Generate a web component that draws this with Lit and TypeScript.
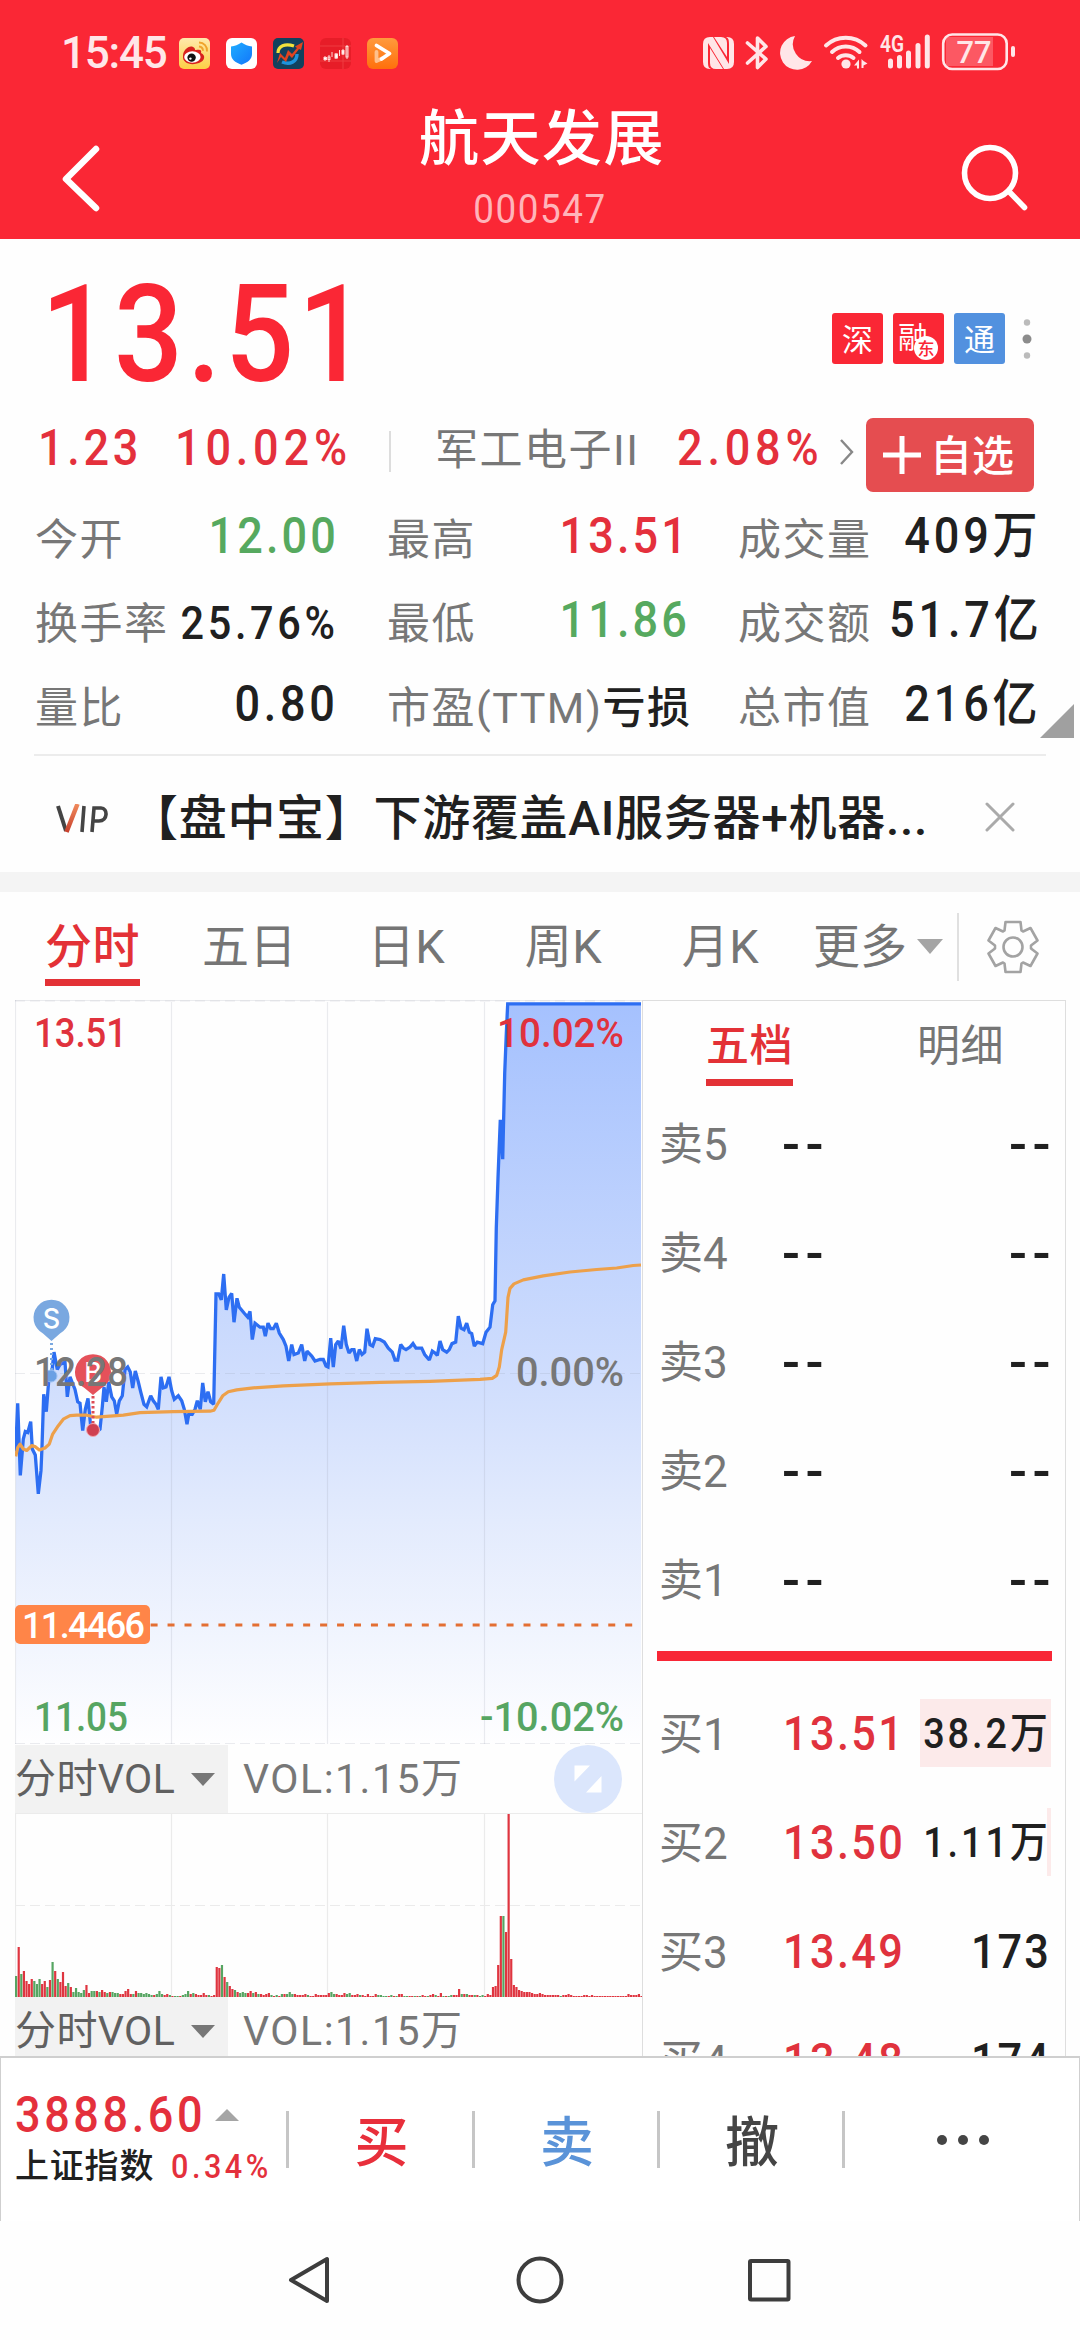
import { LitElement, html, css, svg } from "lit";
import { customElement, property } from "lit/decorators.js";
import { classMap } from "lit/directives/class-map.js";

type Cell = { label: string; value: string; tone?: string };
type Order = { label: string; price: string; qty: string; bar: number; wan?: boolean };

const CELLS: Cell[] = [
  { label: "今开", value: "12.00", tone: "down" },
  { label: "最高", value: "13.51", tone: "up" },
  { label: "成交量", value: "409万", tone: "wide" },
  { label: "换手率", value: "25.76%", tone: "small" },
  { label: "最低", value: "11.86", tone: "down" },
  { label: "成交额", value: "51.7亿", tone: "wide" },
  { label: "量比", value: "0.80" },
  { label: "市盈(TTM)", value: "亏损", tone: "cjk" },
  { label: "总市值", value: "216亿", tone: "wide" },
];

const BIDS: Order[] = [
  { label: "买1", price: "13.51", qty: "38.2万", bar: 131, wan: true },
  { label: "买2", price: "13.50", qty: "1.11万", bar: 4, wan: true },
  { label: "买3", price: "13.49", qty: "173", bar: 0 },
  { label: "买4", price: "13.48", qty: "174", bar: 0 },
];

// Intraday price samples on a 3 x 2.01 sub-pixel grid.
const PRICE = `47,950 53,853 61,998 70,925 76,910 83,912 92,890 97,945 106,957 115,1035 123,988 126,940 131,835 139,870 147,800 154,800
162,750 172,785 180,775 195,770 202,840 210,800 225,825 233,850 240,853 248,908 256,865 264,843 272,900 287,912 300,905 307,860 312,820
319,850 326,810 335,840 343,848 350,875 358,848 367,838 375,785 383,780 391,790 398,822 406,788 415,810 422,830 432,855 440,860 452,838
460,848 468,855 475,865 483,800 490,822 498,820 507,800 515,828 523,845 535,838 545,848 553,865 561,895 567,872 577,875 585,865 592,848
601,865 608,812 616,850 624,830 632,850 641,855 648,633 656,633 664,645 671,593 679,665 687,640 695,632 702,690 711,642 718,660 733,672
743,680 750,668 757,725 765,692 780,700 790,700 796,718 804,692 812,703 820,703 829,692 838,712 850,725 858,738 866,768 875,735 882,755
895,752 905,735 914,768 921,748 935,758 945,768 960,765 970,765 978,778 984,780 992,722 1000,780 1007,735 1015,728 1023,743 1031,697
1039,735 1047,752 1055,745 1062,745 1070,768 1078,745 1086,755 1094,750 1101,703 1110,735 1118,738 1126,723 1140,725 1153,730 1165,742
1177,750 1185,766 1193,766 1202,735 1210,742 1218,745 1230,740 1239,733 1248,742 1265,742 1274,755 1288,766 1297,748 1305,752 1312,757
1320,728 1328,745 1340,750 1348,745 1356,733 1367,730 1375,678 1383,702 1392,705 1400,692 1408,710 1415,713 1423,738 1432,730 1448,733
1458,710 1470,700 1478,655 1485,647 1489,500 1494,400 1501,283 1508,362 1514,190 1519,110 1523,50 1923,50`;

const AVERAGE = `47,960 53,942 60,935 70,945 80,948 95,938 105,940 118,947 135,943 148,935 158,915 175,898 190,885 210,878 230,877 260,877
290,881 330,879 370,877 420,872 520,870 630,869 642,867 655,852 668,838 685,830 710,826 760,822 850,818 990,814 1140,811 1290,809
1440,805 1477,803 1490,797 1498,780 1505,745 1517,710 1520,680 1524,640 1530,622 1542,613 1570,605 1630,597 1710,589 1790,584 1850,581
1900,576 1923,575`;

const toPath = (src: string) =>
  src
    .trim()
    .split(/\s+/)
    .map((p) => {
      const [u, v] = p.split(",").map(Number);
      return `${(u / 3 - 15).toFixed(1)},${(v * 0.4974 - 21).toFixed(1)}`;
    })
    .join(" ");

// Per-minute volume, negative where the minute closed lower.
const VOLUME = [
  -21, 50, -23, 26, 16, 13, 18, -16, -13, -18, 13, 16, -10, 17, -35, 26, -18, 15, 25, 11, -14, 10, -5, -9, -5, -4, -7, 12, 4, -6, -6, 6,
  -5, 7, 5, -4, 5, -5, -4, -4, 3, 3, 6, 8, 3, -3, 6, -4, -4, -3, -4, -3, -2, 2, -3, -6, -3, 2, 3, -2, 1, -1, -1, 1, -2, -3, -6, 3, -4,
  3, 2, 2, 4, 2, -2, 1, 2, 30, 29, -32, 20, -15, 11, 8, -7, 5, -4, -5, -4, 4, 6, -4, 5, -3, 3, 2, 3, 4, -2, 1, -2, 1, -3, 3, -3, -5, -3,
  3, 2, 2, 2, 3, -2, 1, 1, 3, 2, 2, 2, 2, 4, -5, -3, 3, 2, 2, 4, -3, -4, 2, 2, 3, -2, 2, 1, 3, 1, 1, 3, -2, -2, -1, -1, 1, -2, 1, -1, 3,
  3, -1, -1, 1, 1, -1, 1, -1, 2, 1, -1, 2, 3, -2, 1, 4, -1, 1, -1, -2, 2, 2, 8, -3, 3, -3, 2, 2, -2, 2, -1, -2, 1, 3, 2, 10, 11, 32, 81,
  -81, 65, 183, 38, 12, 10, 7, 6, 5, 5, 5, 4, 3, 3, 4, 3, 2, 2, 2, 2, 2, 2, -1, 2, 2, 3, 2, 1, 1, 1, 1, 2, 2, 1, 2, 1, 1, 1, 1, 1, 1, 1,
  1, 1, 1, 1, 1, 1, 3, 2, 2, 2, 3, 1, 0, 4,
];

const RED = "#df3540";
const GREEN = "#56a562";

// Narrow figures with open spacing, used for every quote number.
const figures = css`
  .fig { display: inline-block; transform: scaleX(0.9); transform-origin: left center; letter-spacing: 0.082em; font-weight: 500; white-space: nowrap; }
  .fig.right { transform-origin: right center; margin-right: -0.074em; }
`;

@customElement("status-bar")
class StatusBar extends LitElement {
  static styles = css`
    :host { display: block; height: 106px; }
    .bar { display: flex; align-items: center; height: 106px; padding: 0 65px 0 61px; box-sizing: border-box; }
    .clock { font: 500 44px/60px Roboto, sans-serif; color: #ffe6e8; width: 118px; letter-spacing: -1.2px; }
    .apps { display: flex; gap: 16px; }
    .spacer { flex: 1; }
    svg { display: block; }
  `;
  render() {
    const c = "#ffe6e8";
    return html`<div class="bar">
      <span class="clock">15:45</span>
      <div class="apps">
        <svg width="31" height="31" viewBox="0 0 31 31">
          <defs><linearGradient id="w" x2="0" y2="1"><stop stop-color="#ffe9ac" /><stop offset="1" stop-color="#fdcf45" /></linearGradient></defs>
          <rect width="31" height="31" rx="5" fill="url(#w)" />
          <path d="M4 18 C4 12 10 7 14 9 C17 10 15 12 17 12 C21 11 23 12 22 15 C27 17 26 23 20 25 C12 28 3 25 4 18Z" fill="#d9211d" />
          <ellipse cx="13.4" cy="19" rx="8.2" ry="5.8" fill="#fff" />
          <circle cx="12.6" cy="19.6" r="4.2" fill="#111" /><circle cx="11.4" cy="20.6" r="1.2" fill="#fff" />
          <path d="M20 4.5 A8 8 0 0 1 28 13.5 M20 8.5 A4.5 4.5 0 0 1 24 12.8" fill="none" stroke="#f0a32c" stroke-width="1.9" />
        </svg>
        <svg width="31" height="31" viewBox="0 0 31 31">
          <defs><linearGradient id="s" y2="1"><stop stop-color="#20adff" /><stop offset="1" stop-color="#1276fb" /></linearGradient></defs>
          <rect width="31" height="31" rx="6" fill="#fff" />
          <path d="M15.5 4.5 C19 7 22 8 26 8.5 V16 C26 21 22 24.5 15.5 26.7 C9 24.5 5 21 5 16 V8.5 C9 8 12 7 15.5 4.5Z" fill="url(#s)" />
        </svg>
        <svg width="31" height="31" viewBox="0 0 31 31">
          <rect width="31" height="31" rx="5" fill="#12415d" />
          <path d="M5 15 C5 8 12 5 21 8" fill="none" stroke="#f3e23c" stroke-width="3.2" />
          <path d="M24 16 C24 24 17 27 9 24" fill="none" stroke="#1e93dc" stroke-width="3.4" />
          <path d="M4 25 L7 15 L12 20 L15 12 L19 16 L24 10 L22 8.5 L30 4 L28 12 L26 11 L19 20 L16 17 L13 24 L8 19Z" fill="#e2431f" />
        </svg>
        <svg width="31" height="31" viewBox="0 0 31 31">
          <rect width="31" height="31" rx="6" fill="#e71d28" />
          <path d="M0 8 H31 M0 23 H31 M23 0 V31" stroke="#ef3c40" stroke-width="1" />
          <g stroke="#ffd9d6" stroke-width="1" fill="#fff">
            <path d="M5 18 V23 M9 17 V24 M12 14 V19 M16 15 V21 M19.500 12 V18 M23 11 V17 M27 7 V21" />
            <rect x="4" y="19.500" width="2.500" height="2" /><rect x="8" y="19" width="2" height="2.500" fill="none" />
            <rect x="15" y="16" width="2.500" height="4" /><rect x="22" y="12.500" width="2" height="3.500" /><rect x="26" y="8.500" width="2" height="10.500" fill="none" />
          </g>
        </svg>
        <svg width="31" height="31" viewBox="0 0 31 31">
          <defs><linearGradient id="p" x2="0" y2="1"><stop stop-color="#ff9a3c" /><stop offset="1" stop-color="#ff6f0c" /></linearGradient></defs>
          <rect width="31" height="31" rx="6" fill="url(#p)" />
          <path d="M9.500 14 L9.500 23 L15 20.500" fill="none" stroke="#ffc08c" stroke-width="3.800" stroke-linecap="round" stroke-linejoin="round" />
          <path d="M9.500 7.500 L22.500 15.500 L14.500 21" fill="none" stroke="#fff" stroke-width="3.800" stroke-linecap="round" stroke-linejoin="round" />
        </svg>
      </div>
      <span class="spacer"></span>
      <svg width="312" height="56" viewBox="703 25 312 56">
        <path d="M710 37 H713 L729 64 V44 C729 39 728 37 725 37 H727 Q734 37 734 44 V62 Q734 69 727 69 H724 L708 43 V62 C708 67 709 69 712 69 H710 Q703 69 703 62 V44 Q703 37 710 37Z" fill=${c} />
        <path d="M714 37 H721 Q727 37 727 43 V57Z M723 69 H716 Q710 69 710 63 V48Z" fill=${c} />
        <path d="M747.500 43 L766 59 L757.500 67.500 V38 L766 46.500 L747.500 63" fill="none" stroke=${c} stroke-width="3.600" stroke-linejoin="round" stroke-linecap="round" />
        <path d="M795 36 A17 17 0 1 0 812 61 A17 17 0 0 1 795 36Z" fill=${c} />
        <g fill="none" stroke=${c} stroke-width="4" stroke-linecap="round">
          <path d="M826 45.500 A29 29 0 0 1 865.500 45.500 M832 52 A20 20 0 0 1 859.500 52 M838 58 A12 12 0 0 1 853.500 58" />
        </g>
        <circle cx="846" cy="64" r="4.600" fill=${c} />
        <path d="M854 65.500 L859 59.500 V68.500 H857 V65.500Z M861.500 59 V68 H863.500 V65.500 L867.500 63.500 L863.500 61Z" fill=${c} />
        <text x="880" y="52" font-family="Roboto, sans-serif" font-size="23" font-weight="600" textLength="24" lengthAdjust="spacingAndGlyphs" fill=${c}>4G</text>
        <g stroke=${c} stroke-width="5" stroke-linecap="round">
          <path d="M890.500 61 V66 M899.500 57.500 V66 M908.500 53 V66 M918 45.500 V66 M927.300 37 V66" />
        </g>
        <rect x="946" y="37" width="47" height="29" fill="#fc5863" />
        <rect x="943.200" y="34.500" width="63.500" height="34.500" rx="9" fill="none" stroke=${c} stroke-width="2.600" />
        <rect x="1011" y="46" width="4" height="11" rx="2" fill=${c} />
        <text x="956.500" y="63" font-family="Roboto, sans-serif" font-size="32" font-weight="500" textLength="35" lengthAdjust="spacingAndGlyphs" fill=${c}>77</text>
      </svg>
    </div>`;
  }
}

@customElement("title-bar")
class TitleBar extends LitElement {
  static styles = css`
    :host { display: block; }
    .bar { display: flex; justify-content: space-between; height: 133px; padding: 0 48px 0 60px; box-sizing: border-box; }
    .side { display: flex; width: 72px; padding-top: 36px; }
    .back { width: 60px; }
    .mid { text-align: center; color: #fff; }
    .name { font: 500 60px/66px "Noto Sans CJK SC", sans-serif; letter-spacing: 1.5px; margin: -5px -2px 0 2px; }
    .code { font: 400 40px/50px Roboto, sans-serif; margin-top: 18px; color: #ffb4ba; transform: scaleX(0.92); letter-spacing: 1.7px; }
  `;
  render() {
    return html`<div class="bar">
      <div class="side back">
        <svg width="44" height="72" viewBox="60 142 44 72"><path d="M96 149 L66 179 L96 208" fill="none" stroke="#fff" stroke-width="6.500" stroke-linecap="round" stroke-linejoin="round" /></svg>
      </div>
      <div class="mid"><div class="name">航天发展</div><div class="code">000547</div></div>
      <div class="side">
        <svg width="72" height="72" viewBox="960 142 72 72"><g fill="none" stroke="#fff" stroke-width="5.600" stroke-linecap="round"><circle cx="990" cy="173" r="25.500" /><path d="M1009 191.500 L1024.500 207.500" /></g></svg>
      </div>
    </div>`;
  }
}

@customElement("quote-panel")
class QuotePanel extends LitElement {
  static styles = [
    figures,
    css`
      :host { display: block; font-family: Roboto, "Noto Sans CJK SC", sans-serif; color: #202020; }
      .top { display: flex; align-items: center; height: 178px; padding: 10px 38px 0 41px; box-sizing: border-box; }
      .last { font-size: 135px; line-height: 168px; color: #fa2735; flex: 1; letter-spacing: 0.033em; padding-top: 4px; }
      .tags { display: flex; gap: 10px; align-items: center; margin-top: 11px; }
      .tag { width: 51px; height: 51px; border-radius: 3px; background: #fa2735; color: #fff; font: 400 31px/49px "Noto Sans CJK SC", sans-serif; text-align: center; position: relative; }
      .tag.blue { background: #5291df; }
      .tag.rong { font-size: 30px; line-height: 44px; text-align: left; padding-left: 5px; box-sizing: border-box; }
      .dong { position: absolute; left: 21px; top: 23px; width: 24px; height: 24px; border-radius: 50%; background: #fff; color: #fa2735; font: 500 17px/23px "Noto Sans CJK SC", sans-serif; text-align: center; }
      .more { margin-left: 5px; display: block; width: 22px; }
      .row { display: flex; height: 76px; line-height: 63px; padding-left: 38px; }
      .n { font-size: 50px; color: #e4303c; }
      .chg { display: flex; width: 137px; }
      .pct { display: flex; width: 214px; }
      .pct .n, .spct .n { letter-spacing: 0.107em; }
      .rule { width: 2px; height: 41px; margin: 14px 44px 0 0; background: #ddd; }
      .sector { font-size: 43px; line-height: 66px; width: 242px; color: #777; letter-spacing: 1.5px; }
      .spct { display: flex; width: 161px; }
      .go { width: 28px; display: block; margin-top: 20px; }
      .add { display: flex; align-items: center; width: 168px; height: 74px; line-height: 60px; margin-top: 1px; box-sizing: border-box; padding: 4px 0 0 17px; border-radius: 7px; background: #e54d50; color: #fff; font-size: 42px; font-weight: 500; }
      .add svg { margin-right: 9px; margin-top: -4px; }
      .grid { position: relative; display: grid; grid-template-columns: 300px 299px 298px; column-gap: 52px; padding: 5px 0 0 35px; grid-auto-rows: 84px; }
      .cell { display: flex; justify-content: space-between; align-items: center; white-space: nowrap; }
      .label { font-size: 43px; line-height: 84px; color: #777; letter-spacing: 1.5px; }
      .value { font-size: 50px; line-height: 76px; padding-bottom: 8px; }
      .up { color: #e4303c; }
      .down { color: #56a95f; }
      .up, .down { letter-spacing: 0.07em; }
      .fig.wide { letter-spacing: 0.086em; margin-right: -5px; }
      .fig.small { font-size: 46px; line-height: 80px; padding: 0 0 2px; letter-spacing: 0.088em; margin: 0 -4px 0 -30px; }
      .value.cjk { font-size: 43px; line-height: 84px; padding: 0; transform: none; letter-spacing: 1.5px; margin: 0; }
      .corner { position: absolute; right: 6px; bottom: 12px; width: 34px; height: 34px; background: #a0a0a0; clip-path: polygon(100% 0, 100% 100%, 0 100%); }
      .vip { display: flex; align-items: center; height: 118px; margin: 4px 34px 0; border-top: 2px solid #ececec; box-sizing: border-box; padding-top: 10px; }
      .logo { display: block; width: 52px; margin-left: 22px; flex: none; }
      .headline { font-size: 48px; font-weight: 500; line-height: 70px; width: 855px; flex: none; margin-left: 22px; letter-spacing: 0.7px; white-space: nowrap; }
      .close { margin-top: -4px; }
    `,
  ];
  render() {
    return html`
      <div class="top">
        <span class="fig last">13.51</span>
        <div class="tags">
          <span class="tag">深</span>
          <span class="tag rong">融<span class="dong">东</span></span>
          <span class="tag blue">通</span>
          <svg class="more" height="44" viewBox="0 0 22 44"><circle cx="7" cy="5.500" r="3.200" fill="#bbb" /><circle cx="7" cy="22" r="4.500" fill="#8c8c8c" /><circle cx="7" cy="38.500" r="3.200" fill="#bbb" /></svg>
        </div>
      </div>
      <div class="row">
        <span class="chg"><span class="fig n">1.23</span></span><span class="pct"><span class="fig n">10.02%</span></span><span class="rule"></span>
        <span class="sector">军工电子II</span><span class="spct"><span class="fig n">2.08%</span></span>
        <svg class="go" height="30" viewBox="0 0 28 30"><path d="M3 3 L14 15 L3 27" fill="none" stroke="#888" stroke-width="2.400" /></svg>
        <div class="add"><svg width="38" height="38" viewBox="0 0 38 38"><path d="M19 0 V38 M0 19 H38" stroke="#fff" stroke-width="5" /></svg>自选</div>
      </div>
      <div class="grid">
        ${CELLS.map((c) => html`<div class="cell"><span class="label">${c.label}</span><span class="fig right value ${c.tone ?? ""}">${c.value}</span></div>`)}
        <span class="corner"></span>
      </div>
      <div class="vip">
        <svg class="logo" height="30" viewBox="0 0 52 30">
          <defs><linearGradient id="v" x2="0" y2="1"><stop stop-color="#f08a5c" /><stop offset="1" stop-color="#c8402c" /></linearGradient></defs>
          <path d="M2 2 L10 27" fill="none" stroke="#444" stroke-width="4" />
          <path d="M21.500 0 L10.500 28" fill="none" stroke="url(#v)" stroke-width="4.500" />
          <path d="M28 2 L26 28 M36 28 L38 4 H45 C52 4 52 17 43 17 H37.500" fill="none" stroke="#444" stroke-width="3.600" />
        </svg>
        <span class="headline">【盘中宝】下游覆盖AI服务器+机器...</span>
        <svg class="close" width="30" height="30" viewBox="0 0 30 30"><path d="M2 2 L28 28 M28 2 L2 28" stroke="#aaa" stroke-width="3" stroke-linecap="round" /></svg>
      </div>
    `;
  }
}

@customElement("period-tabs")
class PeriodTabs extends LitElement {
  static styles = css`
    :host { display: block; border-top: 20px solid #f4f4f4; font: 400 47px/109px Roboto, "Noto Sans CJK SC", sans-serif; color: #757575; }
    .tabs { display: grid; grid-template-columns: repeat(5, 157px) 158px 1fr; height: 108px; padding-left: 14px; }
    .tab { position: relative; text-align: center; letter-spacing: 0.5px; }
    .on { color: #e33136; font-weight: 500; }
    .on::after { content: ""; position: absolute; left: 31px; width: 95px; bottom: 15px; height: 7px; background: #e33136; }
    .more { display: flex; align-items: center; gap: 10px; padding-left: 14px; white-space: nowrap; }
    .set { display: flex; align-items: center; gap: 26px; }
    .rule { width: 2px; height: 68px; background: #e0e0e0; }
    svg { display: block; flex: none; }
  `;
  render() {
    const names = ["分时", "五日", "日K", "周K", "月K"];
    return html`<div class="tabs">
      ${names.map((n, i) => html`<span class=${classMap({ tab: true, on: i === 0 })}>${n}</span>`)}
      <span class="more">更多<svg width="26" height="15" viewBox="0 0 26 15"><path d="M0 0 H26 L13 15Z" fill="#a5a5a5" /></svg></span>
      <span class="set"><span class="rule"></span>
        <svg width="56" height="56" viewBox="-28 -28 56 56" fill="none" stroke="#a3a3a3" stroke-width="2.600" stroke-linejoin="round">
          <path d="M-7.500 -25 H7.500 L8.500 -16.500 L10 -15.500 L17.500 -19 L24.500 -6.500 L18 -1.500 V1.500 L24.500 6.500 L17.500 19 L10 15.500 L8.500 16.500 L7.500 25 H-7.500 L-8.500 16.500 L-10 15.500 L-17.500 19 L-24.500 6.500 L-18 1.500 V-1.500 L-24.500 -6.500 L-17.500 -19 L-10 -15.500 L-8.500 -16.500Z" />
          <circle r="9.500" />
        </svg>
      </span>
    </div>`;
  }
}

@customElement("price-chart")
class PriceChart extends LitElement {
  static styles = css`
    :host { display: block; height: 745px; }
    svg { display: block; }
    .ax { font: 500 40px Roboto, sans-serif; }
    .tagtext { font: 500 36px Roboto, sans-serif; fill: #fff; }
    .mark { font: 500 27px Inter, sans-serif; fill: #fff; text-anchor: middle; }
    .up { fill: #e0323d; }
    .flat { fill: #777; }
    .down { fill: #56a562; }
  `;
  private axis(tone: string, text: string, x: number, y: number, len: number) {
    return svg`<text class="ax ${tone}" x=${x} y=${y} textLength=${len} lengthAdjust="spacingAndGlyphs">${text}</text>`;
  }
  render() {
    const line = toPath(PRICE);
    return html`<svg width="627" height="745" viewBox="0 0 627 745">
      <defs>
        <linearGradient id="area" gradientUnits="userSpaceOnUse" x1="0" y1="2" x2="0" y2="744">
          <stop offset="0" stop-color="#a5c1fe" /><stop offset="0.500" stop-color="#cfddfd" />
          <stop offset="0.700" stop-color="#e3ebfd" /><stop offset="1" stop-color="#fefeff" />
        </linearGradient>
      </defs>
      <polygon points="${line} 626,744 1,744" fill="url(#area)" />
      <g stroke="#8f97a8" stroke-opacity="0.180" stroke-width="1.200" fill="none">
        <path d="M0.500 0 V744 M156.500 2 V744 M312.500 2 V744 M469.500 2 V744" />
        <path d="M0 1 H627 M0 373.500 H627 M0 743.500 H627" stroke-dasharray="10 5" />
        <path d="M0 0.500 H627" />
      </g>
      <polyline points=${line} fill="none" stroke="#2d6ef2" stroke-width="3.300" stroke-linejoin="miter" stroke-miterlimit="2" />
      <polyline points=${toPath(AVERAGE)} fill="none" stroke="#eda04a" stroke-width="3.200" stroke-linejoin="round" />
      <path d="M0 625 H627" stroke="#e36f33" stroke-width="2.800" stroke-dasharray="7 9.950" />
      <path d="M36.500 343 V370" stroke="#7aa8e0" stroke-width="3" stroke-dasharray="2 3" />
      <path d="M36.500 341 L28 333.500 A18 18 0 1 1 45 333.500Z" fill="#7aa8e0" />
      <circle cx="36" cy="376" r="6" fill="#6aa0e4" stroke="#9cc0f0" stroke-width="1" />
      <text class="mark" x="36.500" y="327.500">S</text>
      <path d="M78 396 V424" stroke="#dc4a54" stroke-width="3" stroke-dasharray="2.500 2.500" />
      <path d="M78 395 L69.500 388 A18 18 0 1 1 86.500 388Z" fill="#e5515a" />
      <circle cx="78" cy="430" r="6.500" fill="#cf3f50" stroke="#f4a5ad" stroke-width="1" />
      <text class="mark" x="78" y="381.500">B</text>
      ${this.axis("up", "13.51", 19, 47, 93)}
      ${this.axis("up", "10.02%", 482, 47, 127)}
      ${this.axis("flat", "12.28", 19, 386, 94)}
      ${this.axis("flat", "0.00%", 501, 386, 108)}
      ${this.axis("down", "11.05", 19, 731, 94)}
      ${this.axis("down", "-10.02%", 465, 731, 144)}
      <rect x="0" y="605" width="135" height="39" rx="5" fill="#ff8548" />
      <text class="tagtext" x="7" y="638" textLength="123">11.4466</text>
    </svg>`;
  }
}

@customElement("volume-header")
class VolumeHeader extends LitElement {
  @property({ type: Boolean }) expand = false;
  static styles = css`
    :host { display: block; height: 68px; }
    .head { display: flex; align-items: center; height: 68px; font: 400 41px/66px Roboto, "Noto Sans CJK SC", sans-serif; }
    .name { display: flex; align-items: center; justify-content: space-between; width: 214px; height: 68px; box-sizing: border-box; margin-left: -1px; padding: 0 13px 0 1px; background: #f2f2f2; color: #606060; letter-spacing: 0.4px; }
    .value { margin-left: 15px; color: #777; flex: 1; letter-spacing: 1.5px; }
    .round { display: block; margin-right: 20px; }
  `;
  render() {
    return html`<div class="head">
      <span class="name"><span>分时VOL</span><svg width="24" height="13" viewBox="0 0 24 13"><path d="M0 0 H24 L12 13Z" fill="#777" /></svg></span>
      <span class="value">VOL:1.15万</span>
      ${this.expand
        ? html`<svg class="round" width="68" height="68" viewBox="0 0 68 68"><circle cx="34" cy="34" r="34" fill="#dbe6fc" /><path d="M20.500 20.500 H36 L20.500 36.500Z M47.500 31 V47.500 H32Z" fill="#fff" /></svg>`
        : ""}
    </div>`;
  }
}

@customElement("volume-chart")
class VolumeChart extends LitElement {
  static styles = css`
    :host, svg { display: block; height: 184px; }
  `;
  render() {
    return html`<svg width="627" height="184" viewBox="0 0 627 184">
      <g stroke="#ebebeb" stroke-width="1.200">
        <path d="M0 0.500 H627 M0.500 0 V184 M156.500 0 V184 M312.500 0 V184 M469.500 0 V184" />
        <path d="M0 92.500 H627" stroke-dasharray="10 5" />
      </g>
      ${VOLUME.map((v, i) => svg`<rect x=${(i * 2.606).toFixed(2)} y=${184 - Math.abs(v)} width="2.2" height=${Math.abs(v)} fill=${v < 0 ? GREEN : RED} />`)}
    </svg>`;
  }
}

@customElement("order-book")
class OrderBook extends LitElement {
  static styles = [
    figures,
    css`
      :host { display: block; border: 1px solid #dedede; border-width: 1px 1px 0 1px; box-sizing: border-box; width: 424px; height: 1056px; overflow: hidden; font-family: Roboto, "Noto Sans CJK SC", sans-serif; color: #202020; }
      .tabs { display: flex; height: 88px; padding-left: 63px; font-size: 43px; line-height: 91px; color: #757575; }
      .tab { position: relative; width: 88px; text-align: center; margin-right: 124px; letter-spacing: 0.5px; white-space: nowrap; }
      .on { color: #e33136; font-weight: 500; }
      .on::after { content: ""; position: absolute; left: 0; right: 0; top: 78px; height: 7px; background: #e33136; }
      .row { display: flex; align-items: center; height: 109px; padding: 0 14px 0 16px; }
      .label { flex: none; width: 123px; font-size: 44px; line-height: 68px; padding-top: 3px; color: #777; }
      .none { flex: 1; font-size: 53px; font-weight: 500; line-height: 68px; padding-top: 3px; letter-spacing: 5.500px; }
      .none.r { text-align: right; margin-right: -5px; }
      .rule { height: 10px; margin: 17px 13px 18px 14px; background: #f82736; }
      .price { display: flex; flex: 1 1 0; min-width: 0; font-size: 48px; line-height: 70px; color: #e0323d; }
      .price .fig { letter-spacing: 0.056em; margin-left: 1px; }
      .qty { position: relative; flex: none; display: flex; font-size: 48px; line-height: 68px; padding-right: 2px; }
      .qty .fig { letter-spacing: 0.05em; margin-right: -0.05em; }
      .wan { font-size: 42px; padding-right: 3px; line-height: 70px; }
      .wan .fig { letter-spacing: 0.078em; margin-right: -0.07em; }
      .bar { position: absolute; right: 0; top: 0; height: 68px; background: #fceaea; z-index: -1; }
      .bids { position: relative; z-index: 0; }
    `,
  ];
  render() {
    return html`
      <div class="tabs"><span class="tab on">五档</span><span class="tab">明细</span></div>
      ${[5, 4, 3, 2, 1].map((n) => html`<div class="row"><span class="label">卖${n}</span><span class="none">--</span><span class="none r">--</span></div>`)}
      <div class="rule"></div>
      <div class="bids">
        ${BIDS.map(
          (b) => html`<div class="row"><span class="label">${b.label}</span><span class="price"><span class="fig">${b.price}</span></span>
            <span class=${classMap({ qty: true, wan: !!b.wan })}><span class="bar" style="width:${b.bar}px"></span><span class="fig right">${b.qty}</span></span></div>`
        )}
      </div>
    `;
  }
}

@customElement("trade-bar")
class TradeBar extends LitElement {
  static styles = [
    figures,
    css`
      :host { display: block; }
      .bar { display: grid; grid-template-columns: 286px 186px 185px 185px 1fr; height: 165px; box-sizing: border-box; border: 1px solid #cfcfcf; border-width: 2px 1px 0 1px; background: #fff; font-family: Roboto, "Noto Sans CJK SC", sans-serif; }
      .index { padding: 29px 0 0 14px; color: #202020; white-space: nowrap; }
      .line { display: flex; align-items: center; line-height: 56px; }
      .pts { display: flex; width: 200px; }
      .pts .fig { font-size: 50px; color: #e4303c; letter-spacing: 0.08em; }
      .name { font-size: 34px; font-weight: 500; line-height: 46px; margin-right: 17px; letter-spacing: 0.8px; }
      .pct { font-size: 34px; color: #e4303c; line-height: 46px; letter-spacing: 0.115em; }
      .act { position: relative; display: flex; justify-content: center; font: 500 54px/164px "Noto Sans CJK SC", sans-serif; padding-left: 3px; height: 163px; box-sizing: border-box; }
      .act::before { content: ""; position: absolute; left: -1px; top: 53px; width: 3px; height: 57px; background: #c6c6c6; }
      .buy { color: #e82f3b; }
      .sell { color: #5a93d8; }
      .undo { color: #454545; }
      .act span { margin-top: -1px; }
      .act svg { margin-top: 74px; }
    `,
  ];
  render() {
    return html`<div class="bar">
      <div class="index">
        <div class="line"><span class="pts"><span class="fig">3888.60</span></span><svg width="24" height="12" viewBox="0 0 24 12"><path d="M0 12 H24 L12 0Z" fill="#a5a5a5" /></svg></div>
        <div class="line"><span class="name">上证指数</span><span class="fig pct">0.34%</span></div>
      </div>
      <div class="act buy"><span>买</span></div>
      <div class="act sell"><span>卖</span></div>
      <div class="act undo"><span>撤</span></div>
      <div class="act"><svg width="56" height="16" viewBox="0 0 56 16" fill="#454545"><circle cx="7" cy="8" r="5" /><circle cx="28" cy="8" r="5" /><circle cx="49" cy="8" r="5" /></svg></div>
    </div>`;
  }
}

@customElement("app-root")
class AppRoot extends LitElement {
  static styles = css`
    :host { display: block; width: 1080px; height: 2340px; overflow: hidden; background: #fefefe; }
    .head { background: #fa2735; height: 239px; }
    .market { display: grid; grid-template-columns: 627px 424px; padding-left: 15px; height: 1056px; overflow: hidden; }
    .charts { min-width: 0; height: 1056px; overflow: hidden; }
    .nav { display: flex; align-items: center; justify-content: center; height: 118px; }
  `;
  render() {
    return html`
      <div class="head"><status-bar></status-bar><title-bar></title-bar></div>
      <quote-panel></quote-panel>
      <period-tabs></period-tabs>
      <div class="market">
        <div class="charts">
          <price-chart></price-chart>
          <volume-header expand></volume-header>
          <volume-chart></volume-chart>
          <volume-header></volume-header>
        </div>
        <order-book></order-book>
      </div>
      <trade-bar></trade-bar>
      <div class="nav">
        <svg width="504" height="50" viewBox="288 2256 504 50" fill="none" stroke="#3d3d3d" stroke-width="4" stroke-linejoin="round">
          <path d="M327 2260 V2302 L291 2281Z" /><circle cx="540" cy="2281" r="21.500" /><rect x="750" y="2262" width="38.500" height="38.500" rx="1" />
        </svg>
      </div>
    `;
  }
}
